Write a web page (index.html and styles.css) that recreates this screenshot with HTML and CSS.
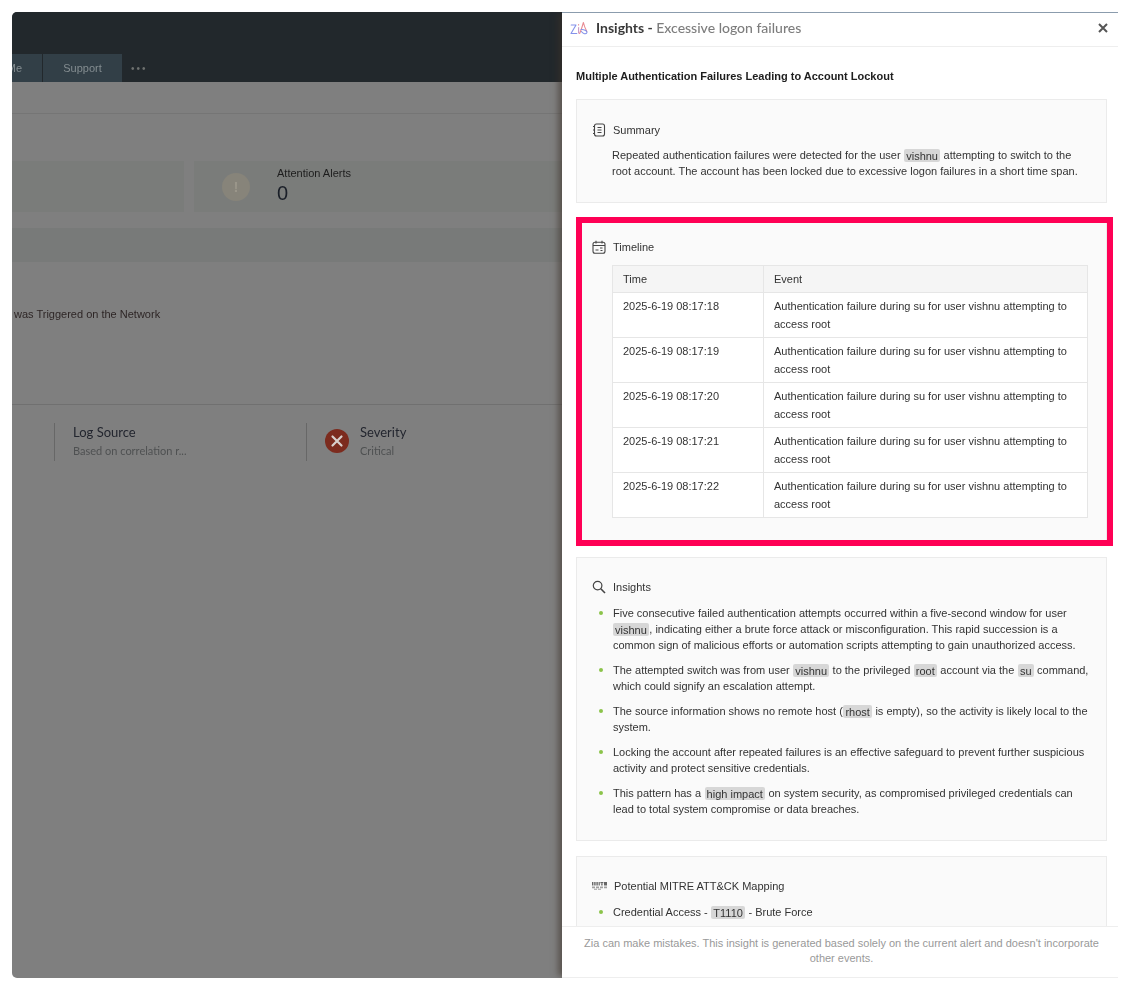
FILE: index.html
```html
<!DOCTYPE html>
<html lang="en">
<head>
<meta charset="utf-8">
<title>Insights</title>
<link rel="stylesheet" href="styles.css">
</head>
<body>
<div class="frame">
  <main class="backdrop">
    <header class="topbar">
      <nav class="tabs">
        <span class="tab tab-clipped">Me</span>
        <span class="tab tab-support">Support</span>
        <span class="more">•••</span>
      </nav>
    </header>
    <div class="band-a"></div>
    <div class="band-b"></div>
    <section class="alert-cards">
      <div class="alert-card alert-card-first"></div>
      <div class="alert-card alert-card-second">
        <span class="warn-icon">!</span>
        <div class="alert-info">
          <div class="alert-label">Attention Alerts</div>
          <div class="alert-count">0</div>
        </div>
      </div>
    </section>
    <div class="stripe"></div>
    <div class="alert-title">was Triggered on the Network</div>
    <section class="stats">
      <div class="stat stat-log">
        <div class="stat-name">Log Source</div>
        <div class="stat-value">Based on correlation r...</div>
      </div>
      <div class="stat stat-severity">
        <svg class="sev-icon" viewBox="0 0 24 24" width="24" height="24"><circle cx="12" cy="12" r="12" fill="#7c2b1e"/><path d="M7.5 7.5l9 9M16.5 7.5l-9 9" stroke="#d8d0cc" stroke-width="2.2" stroke-linecap="round"/></svg>
        <div>
          <div class="stat-name">Severity</div>
          <div class="stat-value">Critical</div>
        </div>
      </div>
    </section>
  </main>

  <aside class="panel">
    <header class="panel-head">
      <svg class="zia" viewBox="0 0 18 14" width="18" height="14" fill="none" stroke-width="1.1" stroke-linecap="round" stroke-linejoin="round">
        <path d="M1.2 4H6L1 12.5H6.8" stroke="#8492ea"/>
        <path d="M8.6 6.5V12" stroke="#c99ac8"/>
        <path d="M8.6 3.6v.3" stroke="#e58a8a"/>
        <path d="M9.6 12.5C11 9.5 12.4 5 13.4 1.5C14.2 5 15.5 8 16.8 10.5" stroke="#e88a92"/>
        <path d="M11 8.5C13.5 8.2 17.6 9.6 16.8 11.8C16 13.6 13 12.8 11.4 10.5" stroke="#8492ea"/>
      </svg>
      <h1 class="panel-title">Insights - <span class="panel-sub">Excessive logon failures</span></h1>
      <svg class="close" viewBox="0 0 10 10" width="10" height="10"><path d="M1 1l8 8M9 1l-8 8" stroke="#555" stroke-width="2"/></svg>
    </header>

    <div class="panel-body">
      <h2 class="headline">Multiple Authentication Failures Leading to Account Lockout</h2>

      <section class="card card-summary">
        <h3 class="card-title">
          <svg class="ico" viewBox="0 0 14 14" width="14" height="14" fill="none" stroke="#444" stroke-width="1.1"><rect x="2.5" y="1" width="10" height="12" rx="2"/><path d="M5.5 4.5h4M5.5 7h4M5.5 9.5h4M1 3.5h2M1 7h2M1 10.5h2"/></svg>
          Summary
        </h3>
        <p class="summary-text">Repeated authentication failures were detected for the user <code class="hl">vishnu</code> attempting to switch to the root account. The account has been locked due to excessive logon failures in a short time span.</p>
      </section>

      <div class="focus-box">
        <section class="card card-timeline">
          <h3 class="card-title">
            <svg class="ico" viewBox="0 0 14 14" width="14" height="14" fill="none" stroke="#444" stroke-width="1.1"><rect x="1" y="2.2" width="12" height="11" rx="2"/><path d="M1 5.5h12M4 .8v2.6M10 .8v2.6M3.5 10h3M8 8h2.5M8.5 10.5h2"/></svg>
            Timeline
          </h3>
          <table class="events">
            <thead><tr><th class="col-time">Time</th><th>Event</th></tr></thead>
            <tbody>
              <tr><td>2025-6-19 08:17:18</td><td>Authentication failure during su for user vishnu attempting to access root</td></tr>
              <tr><td>2025-6-19 08:17:19</td><td>Authentication failure during su for user vishnu attempting to access root</td></tr>
              <tr><td>2025-6-19 08:17:20</td><td>Authentication failure during su for user vishnu attempting to access root</td></tr>
              <tr><td>2025-6-19 08:17:21</td><td>Authentication failure during su for user vishnu attempting to access root</td></tr>
              <tr><td>2025-6-19 08:17:22</td><td>Authentication failure during su for user vishnu attempting to access root</td></tr>
            </tbody>
          </table>
        </section>
      </div>

      <section class="card card-insights">
        <h3 class="card-title">
          <svg class="ico" viewBox="0 0 14 14" width="14" height="14" fill="none" stroke="#444"><circle cx="5.6" cy="5.6" r="4.3" stroke-width="1.2"/><path d="M8.8 8.8l4.2 4.2" stroke-width="1.6"/></svg>
          Insights
        </h3>
        <ul class="points">
          <li>Five consecutive failed authentication attempts occurred within a five-second window for user <code class="hl hl-first">vishnu</code>, indicating either a brute force attack or misconfiguration. This rapid succession is a common sign of malicious efforts or automation scripts attempting to gain unauthorized access.</li>
          <li>The attempted switch was from user <code class="hl">vishnu</code> to the privileged <code class="hl">root</code> account via the <code class="hl">su</code> command, which could signify an escalation attempt.</li>
          <li>The source information shows no remote host (<code class="hl">rhost</code> is empty), so the activity is likely local to the system.</li>
          <li>Locking the account after repeated failures is an effective safeguard to prevent further suspicious activity and protect sensitive credentials.</li>
          <li>This pattern has a <code class="hl">high impact</code> on system security, as compromised privileged credentials can lead to total system compromise or data breaches.</li>
        </ul>
      </section>

      <section class="card card-mitre">
        <h3 class="card-title">
          <svg class="ico" viewBox="0 0 15 14" width="15" height="14" fill="#666"><path d="M0 3h1.4v3.5H0zM2.2 3h1.4v3.5H2.2zM4.4 3h1.4v3.5H4.4zM6.6 3h1.2v3.5H6.6zM8.4 3h3v1.2h-3zM12 3h3v3.5h-3zM9.2 4.5h1.4v2H9.2z"/><path d="M0 7.6h3v1.6H0zM4 7.6h3v1.6H4zM8 7.6h3v1.6H8zM12 7.6h3v1.6h-3zM2 9.8h3v1H2zM6 9.8h3v1H6z" fill="#a0a0a0"/></svg>
          Potential MITRE ATT&amp;CK Mapping
        </h3>
        <ul class="points">
          <li>Credential Access - <code class="hl">T1110</code> - Brute Force</li>
        </ul>
      </section>
    </div>

    <footer class="panel-foot">Zia can make mistakes. This insight is generated based solely on the current alert and doesn't incorporate other events.</footer>
  </aside>
</div>
</body>
</html>
```
FILE: styles.css
```css
* { box-sizing: border-box; }
html, body { margin: 0; padding: 0; background: #fff; }
body { height: 990px; overflow: hidden; font-family: "Liberation Sans", Arial, sans-serif; }

.frame {
  display: flex;
  width: 1106px;
  height: 966px;
  margin: 12px 0 0 12px;
  overflow: hidden;
  filter: blur(.35px);
}

/* dimmed page behind the panel */
.backdrop {
  flex: 0 0 550px;
  background: #7f7f7f;
  border-radius: 5px 0 0 5px;
  overflow: hidden;
  color: #222;
}
.topbar {
  display: flex;
  align-items: flex-end;
  height: 70px;
  background: #22282c;
}
.tabs { display: flex; align-items: center; height: 28px; }
.tab {
  display: flex;
  align-items: center;
  height: 28px;
  background: #323f47;
  color: #838c90;
  font-size: 11px;
}
.tab-clipped { width: 30px; justify-content: flex-end; padding-right: 20px; margin-right: 1px; }
.tab-support { width: 79px; justify-content: center; }
.more { margin-left: 9px; color: #6e716f; font-size: 10px; letter-spacing: 2px; }
.band-a { height: 32px; border-bottom: 1px solid #757575; }
.band-b { height: 47px; }
.alert-cards { display: flex; gap: 10px; height: 51px; }
.alert-card { background: #7a7c7a; }
.alert-card-first { flex: 0 0 172px; }
.alert-card-second { flex: 1; display: flex; align-items: center; padding: 0 0 2px 28px; }
.warn-icon {
  display: flex;
  align-items: center;
  justify-content: center;
  width: 28px;
  height: 28px;
  margin: 2px 27px 0 0;
  border-radius: 50%;
  background: #87847a;
  color: #9a968a;
  font-size: 15px;
  font-weight: bold;
}
.alert-label { font-size: 11px; line-height: 14px; color: #1d1d1d; }
.alert-count { font-size: 20px; line-height: 26px; color: #1a1f28; }
.stripe { height: 34px; margin-top: 16px; background: #787a79; }
.alert-title { padding: 45px 0 0 2px; font-size: 11px; line-height: 14px; height: 143px; border-bottom: 1px solid #707070; color: #2e2626; }
.stats { display: flex; margin: 18px 0 0 42px; height: 38px; }
.stat { border-left: 1px solid #676767; font-family: Lato, sans-serif; }
.stat-log { flex: 0 0 252px; padding: 0 0 0 18px; }
.stat-severity { display: flex; gap: 11px; padding-left: 18px; }
.sev-icon { margin-top: 6px; }
.stat-name { font-size: 13px; line-height: 18px; color: #23262f; }
.stat-value { font-size: 11px; line-height: 20px; color: #4f5152; }

/* insights panel */
.panel {
  position: relative;
  flex: 0 0 556px;
  min-width: 0;
  display: flex;
  flex-direction: column;
  background: #fff;
  border-top: 1px solid #8b9cad;
  box-shadow: -6px 0 6px -2px rgba(60, 50, 40, .55);
}
.panel-head {
  display: flex;
  align-items: center;
  flex: 0 0 34px;
  padding: 0 10px 3px 8px;
  border-bottom: 1px solid #eee;
}
.zia { flex: none; margin-right: 8px; }
.panel-title { flex: 1; margin: 0; font: 700 14px/20px Lato, sans-serif; color: #3a3a3a; }
.panel-sub { font-weight: 500; color: #7d7d7d; }
.panel-body {
  flex: 1;
  min-height: 0;
  overflow: hidden;
  padding: 0 5px 0 14px;
  display: flex;
  flex-direction: column;
}
.headline { flex: none; margin: 0; padding: 22px 0 16px; font-size: 11px; line-height: 14px; font-weight: bold; color: #1e1e1e; }
.card {
  flex: none;
  background: #fafafa;
  border: 1px solid #ebebeb;
  width: 531px;
}
.card-title {
  display: flex;
  align-items: center;
  gap: 7px;
  margin: 0;
  font-size: 11px;
  font-weight: normal;
  line-height: 14px;
  color: #333;
}
.ico { flex: none; }
.card-summary { height: 104px; padding: 23px 15px 0 15px; }
.summary-text { margin: 10px 0 0 20px; font-size: 11px; line-height: 16px; color: #333; }
.hl {
  padding: .5px 2px;
  margin: 0 .5px;
  border-radius: 2px;
  background: #d7d7d7;
  font-family: inherit;
  font-size: inherit;
}
.hl-first { margin-left: 0; }
.focus-box {
  flex: none;
  width: 537px;
  margin: 14px 0 11px;
  border: 6px solid #ff0055;
}
.card-timeline { width: 525px; height: 317px; padding: 17px 18px 0 10px; border-width: 0; border-right: 1px solid #ebebeb; }
.events {
  width: 476px;
  margin: 11px 0 0 20px;
  border-collapse: collapse;
  table-layout: fixed;
  background: #fff;
  font-size: 11px;
  color: #333;
}
.events th, .events td { border: 1px solid #e6e6e6; padding: 4px 10px; text-align: left; vertical-align: top; line-height: 18px; }
.events th { background: #f5f5f5; font-weight: normal; height: 27px; }
.col-time { width: 151px; }
.card-insights { height: 284px; padding: 22px 15px 0 15px; }
.points { margin: 11px 0 0; padding: 0 0 0 21px; list-style: none; font-size: 11px; line-height: 16px; color: #333; }
.points li { position: relative; margin-bottom: 9px; }
.points li::before {
  content: "";
  position: absolute;
  left: -14px;
  top: 6px;
  width: 4px;
  height: 4px;
  border-radius: 50%;
  background: #8bc34a;
}
.card-mitre { margin-top: 15px; height: 120px; padding: 22px 15px 0; }
.panel-foot {
  flex: 0 0 52px;
  position: relative;
  padding: 9px 16px 0 19px;
  background: #fff;
  border-top: 1px solid #eee;
  border-bottom: 1px solid #eee;
  text-align: center;
  font-size: 11px;
  line-height: 15px;
  color: #999;
}
```
